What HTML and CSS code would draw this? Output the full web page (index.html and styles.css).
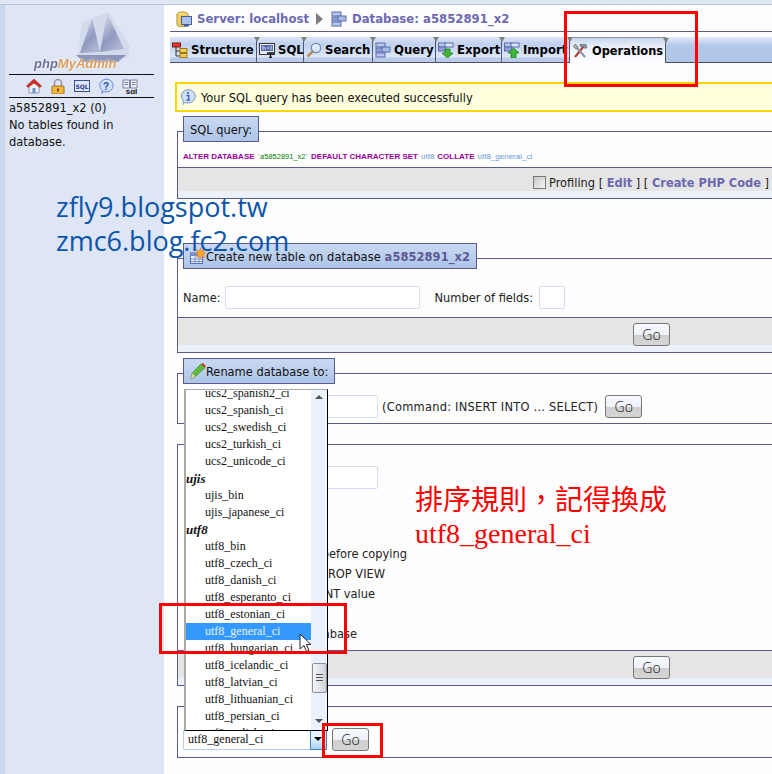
FILE: index.html
```html
<!DOCTYPE html>
<html lang="en">
<head>
    <meta charset="UTF-8">
    <meta name="viewport" content="width=device-width, initial-scale=1.0">
    <title>phpMyAdmin</title>
    <link rel="stylesheet" href="styles.css">
</head>
<body>
    <!-- shared icons -->
    <svg class="defs" width="0" height="0">
        <defs>
            <linearGradient id="sailGrad" x1="0" y1="0" x2="0.6" y2="1">
                <stop offset="0" stop-color="#e2e7f4"/>
                <stop offset="0.65" stop-color="#8f99bf"/>
                <stop offset="1" stop-color="#aeb6d2"/>
            </linearGradient>
        </defs>
        <symbol id="i-tables" viewBox="0 0 16 16">
            <rect x="1" y="1" width="9" height="4" fill="#b9c6ea" stroke="#5b6cae"/>
            <rect x="1" y="6" width="9" height="4" fill="#8fa3d8" stroke="#5b6cae"/>
            <rect x="1" y="11" width="9" height="4" fill="#b9c6ea" stroke="#5b6cae"/>
            <rect x="7" y="5" width="8" height="5" fill="#a9b9e4" stroke="#5b6cae"/>
        </symbol>
        <symbol id="i-structure" viewBox="0 0 16 16">
            <rect x="0.5" y="1" width="8" height="4" fill="#e33a2c" stroke="#7c1d14"/>
            <path d="M4 5v9h4M4 9h4" fill="none" stroke="#333"/>
            <rect x="8" y="6.5" width="7" height="4" fill="#f4cd4d" stroke="#9a7a1a"/>
            <rect x="8" y="11.5" width="7" height="4" fill="#f4cd4d" stroke="#9a7a1a"/>
        </symbol>
        <symbol id="i-sql" viewBox="0 0 16 16">
            <rect x="0.5" y="1.5" width="15" height="11" fill="#e8edf7" stroke="#333"/>
            <rect x="2" y="3" width="12" height="6" fill="#5a6cb0"/>
            <path d="M3 5h2M3 7h2M6 5v2h1M9 5v2M11 5h2M11 7h2" stroke="#fff" stroke-width="0.8"/>
            <path d="M8 11h7M11.500 11v4.500M10 15.500h3" stroke="#111" stroke-width="1.300"/>
        </symbol>
        <symbol id="i-search" viewBox="0 0 16 16">
            <path d="M1.500 14.500l5-5" stroke="#b98f55" stroke-width="2.500"/>
            <circle cx="10" cy="6" r="4.700" fill="#d8e8f8" stroke="#7488a8" stroke-width="1.300"/>
            <path d="M7.500 5a3 3 0 0 1 3-2" fill="none" stroke="#fff"/>
        </symbol>
        <symbol id="i-export" viewBox="0 0 16 16">
            <rect x="0.500" y="1" width="8" height="4" fill="#b9c6ea" stroke="#5b6cae"/>
            <rect x="7" y="1" width="8" height="4" fill="#dfe5f6" stroke="#5b6cae"/>
            <rect x="0.500" y="5" width="7" height="4" fill="#8fa3d8" stroke="#5b6cae"/>
            <path d="M7 7h5v4h3l-5.500 5L4 11h3z" fill="#3fb53a" stroke="#1e7a1e" stroke-width="0.800"/>
        </symbol>
        <symbol id="i-import" viewBox="0 0 16 16">
            <rect x="0.500" y="1" width="8" height="4" fill="#b9c6ea" stroke="#5b6cae"/>
            <rect x="7" y="1" width="8" height="4" fill="#dfe5f6" stroke="#5b6cae"/>
            <rect x="0.500" y="5" width="7" height="4" fill="#8fa3d8" stroke="#5b6cae"/>
            <path d="M9.500 6L15 11h-3v5H7v-5H4z" fill="#3fb53a" stroke="#1e7a1e" stroke-width="0.800"/>
        </symbol>
        <symbol id="i-ops" viewBox="0 0 16 16">
            <path d="M3 14L12 3" stroke="#b33a2a" stroke-width="2"/>
            <path d="M8 1.500h6l1 3-2 1-1.500-1.500-3-.5z" fill="#8d96a6" stroke="#4b5260" stroke-width="0.600"/>
            <path d="M13 14L5 5" stroke="#8a919e" stroke-width="2"/>
            <path d="M1.500 3l2-2 1 2 1.500.5L5 6 2.500 5z" fill="#aab1bd" stroke="#555" stroke-width="0.600"/>
        </symbol>
        <symbol id="i-home" viewBox="0 0 16 16">
            <path d="M3 8v7h10V8L8 4z" fill="#eef1f7" stroke="#8d95a8"/>
            <path d="M0.500 8L8 1l7.500 7-1.500 1.500L8 5 2 9.500z" fill="#d62d22" stroke="#8a1a14" stroke-width="0.500"/>
            <rect x="6.500" y="10" width="3" height="5" fill="#6f8fc8"/>
        </symbol>
        <symbol id="i-lock" viewBox="0 0 16 16">
            <path d="M4.500 8V5a3.500 3.500 0 0 1 7 0v3" fill="none" stroke="#9a9aa5" stroke-width="1.600"/>
            <rect x="2" y="8" width="12" height="8" rx="1" fill="#f2b73f" stroke="#a4701a"/>
            <rect x="7" y="10.500" width="2" height="3" fill="#7a5212"/>
        </symbol>
        <symbol id="i-info" viewBox="0 0 16 16">
            <path d="M8 .5a7.500 6.800 0 1 1-3.200 13L3 15.500l.4-3.500A7.500 6.800 0 0 1 8 .5z" fill="#cfdff6" stroke="#7f9ac9"/>
            <circle cx="8" cy="4" r="1.100" fill="#3e62a8"/>
            <path d="M6.500 6.500h2.300v4.500h1M6.500 11h2.500" fill="none" stroke="#3e62a8" stroke-width="1.300"/>
        </symbol>
        <symbol id="i-newtable" viewBox="0 0 16 16">
            <rect x="0.500" y="5" width="12" height="10.500" fill="#eef2fb" stroke="#5b6cae"/>
            <rect x="0.500" y="5" width="12" height="3" fill="#7b8fcb"/>
            <path d="M1 11h11M1 13.500h11M5 8v7.500M9 8v7.500" stroke="#7b8fcb"/>
            <path d="M10.500 0l1 3 3-1.500L13 4.500l3 1-3 1 1.500 3-3-1.500-1 3-1-3-3 1.500L8 6.500l-3-1 3-1L6.500 1.500l3 1.500z" fill="#f7a823" stroke="#d9631a" stroke-width="0.400"/>
        </symbol>
        <symbol id="i-pencil" viewBox="0 0 16 16">
            <path d="M1 15.500l1-5L11 1l4 3.500-9.500 9z" fill="#62bb3a" stroke="#2f7a1e" stroke-width="0.700"/>
            <path d="M11 1l4 3.500 1-1.500-3-3z" fill="#d93a2e"/>
            <path d="M1 15.500l1-5 3.500 3z" fill="#f0d7a8"/>
        </symbol>
    </svg>

    <div class="top-strip"></div>

    <div class="layout">
        <aside class="sidebar">
            <svg class="logo" viewBox="0 0 120 62" width="120" height="62">
                <g class="ship">
                    <path d="M62 12L88 2l22 34-2 12H58z" fill="#c3cbe2" opacity="0.45"/>
                    <path d="M72 8L60 43l20-1z" fill="url(#sailGrad)"/>
                    <path d="M87 3L80 42l24-3z" fill="url(#sailGrad)"/>
                    <path d="M56 45h50l-8 7H64z" fill="#8d96ba"/>
                </g>
                <text x="14" y="58" class="logo-php">php<tspan class="logo-my">MyAdmin</tspan></text>
            </svg>
            <div class="nav-icons">
                <svg class="icon"><use href="#i-home"/></svg>
                <svg class="icon"><use href="#i-lock"/></svg>
                <svg class="icon" viewBox="0 0 16 16">
                    <rect x="0.500" y="2.500" width="15" height="11" fill="#dfe6f6" stroke="#3a4d9a"/>
                    <text x="8" y="11" text-anchor="middle" class="icon-text">SQL</text>
                </svg>
                <svg class="icon" viewBox="0 0 16 16">
                    <path d="M8 1a7 6.500 0 1 1-3 12.300L4 15.500l.3-3A7 6.500 0 0 1 8 1z" fill="#cfe0f8" stroke="#6d8fd0"/>
                    <text x="8" y="11.500" text-anchor="middle" class="help-text">?</text>
                </svg>
                <svg class="icon" viewBox="0 0 16 16">
                    <path d="M1 2h6.500v8H1zM8.500 2H15v8H8.500z" fill="#eaeef7" stroke="#7a84a0"/>
                    <path d="M2.500 4.500h3.500M2.500 6.500h3.500M10 4.500h3.500M10 6.500h3.500" stroke="#7a84a0"/>
                    <text x="9.500" y="15.500" text-anchor="middle" class="docs-text">sql</text>
                </svg>
            </div>
            <div class="db-name">a5852891_x2 (0)</div>
            <div class="db-note">No tables found in database.</div>
        </aside>

        <main class="content">
            <div class="crumbs">
                <svg class="icon" viewBox="0 0 16 16">
                    <ellipse cx="6.500" cy="3.500" rx="5.500" ry="2.500" fill="#f7dd7c" stroke="#b08f2c"/>
                    <path d="M1 3.500v10c0 3 11 3 11 0v-10" fill="#f2cf5c" stroke="#b08f2c"/>
                    <rect x="5.500" y="5.500" width="10" height="8" fill="#a8c0ea" stroke="#44609c"/>
                    <rect x="8" y="14" width="5" height="1.500" fill="#44609c"/>
                </svg>
                <a class="crumb">Server: localhost</a>
                <span class="crumb-arrow"></span>
                <svg class="icon"><use href="#i-tables"/></svg>
                <a class="crumb">Database: a5852891_x2</a>
            </div>

            <div class="tabs">
                <div class="tab tab-structure"><svg class="icon"><use href="#i-structure"/></svg>Structure</div>
                <div class="tab tab-sql"><svg class="icon"><use href="#i-sql"/></svg>SQL</div>
                <div class="tab tab-search"><svg class="icon"><use href="#i-search"/></svg>Search</div>
                <div class="tab tab-query"><svg class="icon"><use href="#i-tables"/></svg>Query</div>
                <div class="tab tab-export"><svg class="icon"><use href="#i-export"/></svg>Export</div>
                <div class="tab tab-import"><svg class="icon"><use href="#i-import"/></svg>Import</div>
                <div class="tab tab-ops active"><svg class="icon"><use href="#i-ops"/></svg>Operations</div>
            </div>

            <div class="notice">
                <svg class="icon"><use href="#i-info"/></svg>
                Your SQL query has been executed successfully
            </div>

            <section class="panel panel-query">
                <div class="legend">SQL query:</div>
                <div class="sql-line">
                    <span class="kw">ALTER DATABASE</span>
                    <span class="str">`a5852891_x2`</span>
                    <span class="kw">DEFAULT CHARACTER SET</span>
                    <span class="val">utf8</span>
                    <span class="kw">COLLATE</span>
                    <span class="val">utf8_general_ci</span>
                </div>
                <div class="panel-foot foot-links">
                    <span class="fake-check"></span>
                    <span>Profiling [ <a class="link">Edit</a> ] [ <a class="link">Create PHP Code</a> ]</span>
                </div>
            </section>

            <section class="panel panel-create">
                <div class="legend">
                    <svg class="icon"><use href="#i-newtable"/></svg>
                    <span class="legend-wide">Create new table on database <b class="legend-db">a5852891_x2</b></span>
                </div>
                <div class="form-row">
                    <label>Name:</label>
                    <span class="field field-name"></span>
                    <label class="label-fields">Number of fields:</label>
                    <span class="field field-count"></span>
                </div>
                <div class="panel-foot foot-go"><button class="go">Go</button></div>
            </section>

            <section class="panel panel-rename">
                <div class="legend">
                    <svg class="icon"><use href="#i-pencil"/></svg>
                    <span>Rename database to:</span>
                </div>
                <div class="form-row rename-row">
                    <span class="field field-rename"></span>
                    <span class="rename-cmd">(Command: INSERT INTO ... SELECT)</span>
                    <button class="go">Go</button>
                </div>
            </section>

            <section class="panel panel-copy">
                <div class="form-row copy-input"><span class="field field-rename"></span></div>
                <ul class="copy-options">
                    <li class="opt-create">CREATE DATABASE before copying</li>
                    <li class="opt-drop">Add DROP TABLE / DROP VIEW</li>
                    <li class="opt-auto">Add AUTO_INCREMENT value</li>
                    <li class="opt-blank">Add constraints</li>
                    <li class="opt-switch">Switch to copied database</li>
                </ul>
                <div class="panel-foot foot-go"><button class="go">Go</button></div>
            </section>

            <section class="panel panel-collation">
                <div class="collation-row">
                    <div class="select-box">
                        <span>utf8_general_ci</span>
                        <span class="select-btn"></span>
                    </div>
                    <button class="go">Go</button>
                </div>
            </section>
        </main>
    </div>

    <!-- open dropdown -->
    <div class="dropdown">
        <ul class="options">
            <li>ucs2_spanish2_ci</li>
            <li>ucs2_spanish_ci</li>
            <li>ucs2_swedish_ci</li>
            <li>ucs2_turkish_ci</li>
            <li>ucs2_unicode_ci</li>
            <li class="group">ujis</li>
            <li>ujis_bin</li>
            <li>ujis_japanese_ci</li>
            <li class="group">utf8</li>
            <li>utf8_bin</li>
            <li>utf8_czech_ci</li>
            <li>utf8_danish_ci</li>
            <li>utf8_esperanto_ci</li>
            <li>utf8_estonian_ci</li>
            <li class="selected">utf8_general_ci</li>
            <li>utf8_hungarian_ci</li>
            <li>utf8_icelandic_ci</li>
            <li>utf8_latvian_ci</li>
            <li>utf8_lithuanian_ci</li>
            <li>utf8_persian_ci</li>
            <li>utf8_polish_ci</li>
        </ul>
        <div class="scrollbar">
            <span class="arrow-up"></span>
            <span class="thumb"></span>
            <span class="arrow-down"></span>
        </div>
    </div>

    <svg class="cursor" viewBox="0 0 13 20" width="13" height="20">
        <path d="M1 1v15l4-3.500 2.500 6 2.500-1-2.500-6H12z" fill="#fff" stroke="#223" stroke-width="1"/>
    </svg>

    <!-- annotations pasted over the screenshot -->
    <div class="watermark wm-1">zfly9.blogspot.tw</div>
    <div class="watermark wm-2">zmc6.blog.fc2.com</div>
    <div class="note-red">
        <div class="note-zh">排序規則，記得換成</div>
        <div class="note-en">utf8_general_ci</div>
    </div>
    <div class="redbox box-ops"></div>
    <div class="redbox box-general"></div>
    <div class="redbox box-go"></div>
</body>
</html>
```

FILE: styles.css
```css
* {
    box-sizing: border-box;
}

html, body {
    height: 774px;
    overflow: hidden;
}

body {
    margin: 0;
    position: relative;
    font-family: "DejaVu Sans", sans-serif;
    font-stretch: condensed;
    font-size: 12.7px;
    color: #222;
    background: #fdfdfe;
}

.defs {
    position: absolute;
}

.icon {
    width: 16px;
    height: 16px;
    flex: none;
    display: block;
}

.icon-text {
    font: bold 6px "DejaVu Sans", sans-serif;
    fill: #2a3f95;
}

.help-text {
    font: bold 10px "Liberation Sans", sans-serif;
    fill: #2a4fa8;
}

.docs-text {
    font: bold 8px "Liberation Sans", sans-serif;
    fill: #111;
}

.top-strip {
    height: 5px;
    background: #dfe7f5;
    border-bottom: 1px solid #b5c5d3;
}

.layout {
    display: flex;
    height: 769px;
}

/* Left frame */
.sidebar {
    width: 164px;
    flex: none;
    padding: 0 10px 0 4px;
    background: #dee6f5;
    border-left: 5px solid #cbd9f0;
}

.logo {
    display: block;
    margin: 5px 0 2px 11px;
}

.ship {
    filter: blur(0.6px);
}

.logo-php {
    font: italic bold 13px "Liberation Sans", sans-serif;
    font-stretch: normal;
    fill: #6f6f97;
    filter: drop-shadow(0 0 1px #fff);
}

.logo-my {
    fill: #dd9f58;
}

.nav-icons {
    display: flex;
    justify-content: center;
    gap: 8px;
    height: 24px;
    padding-top: 3px;
    border-top: 1px solid #111;
    border-bottom: 1px solid #111;
}

.db-name {
    margin-top: 1px;
    line-height: 17px;
    color: #111;
}

.db-note {
    line-height: 17px;
    color: #111;
}

/* Right frame */
.content {
    flex: 1;
    min-width: 0;
    padding-left: 6px;
    overflow: hidden;
}

.crumbs {
    display: flex;
    align-items: center;
    height: 27px;
    padding: 1px 0 0 6px;
    border-bottom: 1px solid #5a5a80;
    gap: 5px;
    font-size: 13px;
    font-weight: bold;
}

.crumb {
    color: #6c6ab0;
}

.crumb-arrow {
    width: 0;
    height: 0;
    margin: 0 3px 0 2px;
    border-left: 7px solid #7d7d7d;
    border-top: 6px solid transparent;
    border-bottom: 6px solid transparent;
}

.tabs {
    display: flex;
    height: 26px;
    margin-top: 5px;
    background: linear-gradient(#e3eaf7, #b3c8ea 35%, #b0c6e8);
    border-bottom: 1px solid #4d4d6c;
}

.tab {
    position: relative;
    display: flex;
    align-items: center;
    gap: 3px;
    height: 25px;
    padding-left: 2px;
    font-size: 13px;
    font-weight: bold;
    color: #000;
    border-right: 1px solid #55556f;
    background: linear-gradient(#dbe4f5, #bfd1ee 30%, #dde7f6 80%, #b9cbe8 84%);
}

.tab::before {
    content: "";
    position: absolute;
    top: 0;
    right: -4px;
    z-index: 1;
    border-top: 5px solid #808080;
    border-left: 3px solid transparent;
    border-right: 3px solid transparent;
}

.tab-structure { width: 87px; }
.tab-sql { width: 47px; }
.tab-search { width: 69px; }
.tab-query { width: 63px; }
.tab-export { width: 66px; }
.tab-import { width: 68px; }
.tab-ops { width: 96px; }

.tab.active {
    height: 26px;
    gap: 4px;
    font-size: 12.7px;
    background: linear-gradient(#c8d6ee, #eef3fb 40%, #fdfdfe);
    border-top: 1px solid #909090;
    border-right: 1px solid #555;
}

.notice {
    display: flex;
    align-items: center;
    gap: 5px;
    height: 30px;
    margin: 19px 0 0 5px;
    padding-left: 3px;
    color: #111;
    background: #ffffdd;
    border-top: 2px solid #ffd700;
    border-bottom: 2px solid #ffd700;
    border-left: 2px solid #ffd700;
}

.panel {
    width: 620px;
    margin-left: 7px;
    border: 1px solid #5a5a8e;
    border-right: 0;
    padding: 0;
}

.panel-query { margin-top: 19px; }
.panel-create { margin-top: 59px; }
.panel-rename { margin-top: 20px; }
.panel-copy { margin-top: 20px; height: 242px; display: flex; flex-direction: column; }
.panel-collation { margin-top: 20px; height: 52px; }

.legend {
    display: flex;
    align-items: center;
    width: fit-content;
    height: 26px;
    margin: -16px 0 0 5px;
    padding: 0 6px;
    color: #111;
    background: linear-gradient(#c9d9f1, #adc4e8);
    border: 1px solid #5a5a8e;
}

.legend-wide {
    letter-spacing: 0.1px;
}

.legend-db {
    color: #5c5a94;
}

.sql-line {
    display: flex;
    gap: 3px;
    height: 25px;
    align-items: center;
    padding: 3px 0 0 5px;
    font: bold 8px "Liberation Sans", sans-serif;
}

.kw { color: #990099; }
.str { color: #008000; font-weight: normal; font-size: 7.5px; }
.val { color: #6a9bd8; font-weight: normal; }

.panel-foot {
    background: #e5e5e5;
    border-top: 1px solid #5a5a8e;
    border-bottom: 7px solid #eaf1fb;
}

.foot-links {
    display: flex;
    align-items: center;
    gap: 3px;
    height: 31px;
    padding: 6px 0 0 355px;
    color: #222;
}

.fake-check {
    width: 13px;
    height: 13px;
    background: linear-gradient(135deg, #c8c8c8, #f4f4f4);
    border: 1px solid #777;
}

.link {
    font-weight: bold;
    color: #6a68ae;
}

.foot-go {
    height: 35px;
    padding: 5px 0 0 455px;
}

.panel-copy .panel-foot {
    margin-top: auto;
}

.go {
    width: 37px;
    height: 23px;
    padding: 0;
    font-family: "Open Sans", sans-serif;
    font-stretch: normal;
    font-size: 14px;
    font-weight: 300;
    color: #111;
    border: 1px solid #777;
    border-radius: 3px;
    background: linear-gradient(#f6f9fd 0, #eef2f8 50%, #cfcfcf 52%, #d6d6d6);
}

.form-row {
    display: flex;
    align-items: center;
    padding: 17px 0 8px 5px;
}

.field {
    display: block;
    height: 23px;
    background: #fff;
    border: 1px solid #d5dfef;
    border-radius: 2px;
}

.field-name {
    width: 195px;
    margin-left: 4px;
}

.label-fields {
    margin-left: 15px;
}

.field-count {
    width: 26px;
    margin-left: 6px;
}

.field-rename {
    width: 179px;
}

.rename-row {
    gap: 4px;
    padding: 11px 0 5px 21px;
}

.rename-cmd {
    letter-spacing: 0.25px;
}

.rename-row .go {
    margin-left: 3px;
}

.copy-input {
    padding: 21px 0 0 21px;
}

.copy-options {
    list-style: none;
    margin: 55px 0 0;
    padding: 0;
    width: 300px;
}

.copy-options li {
    height: 20px;
    line-height: 20px;
    text-align: right;
}

.opt-create { width: 229px; }
.opt-drop { width: 207px; }
.opt-auto { width: 197px; }
.opt-blank { width: 100px; visibility: hidden; }
.opt-switch { width: 179px; }

.collation-row {
    display: flex;
    align-items: center;
    gap: 5px;
    padding: 21px 0 0 5px;
}

.select-box {
    display: flex;
    align-items: center;
    justify-content: space-between;
    width: 144px;
    height: 21px;
    padding-left: 4px;
    font: 12px "Liberation Serif", serif;
    color: #111;
    background: #fff;
    border: 1px solid #b4d0ea;
    border-radius: 2px;
}

.select-btn {
    position: relative;
    width: 17px;
    height: 21px;
    margin-right: -1px;
    background: linear-gradient(#e8f2fc 40%, #a9d2f2);
    border: 1px solid #3d86c6;
}

.select-btn::after {
    content: "";
    position: absolute;
    top: 7px;
    left: 3px;
    border-top: 4px solid #000;
    border-left: 4px solid transparent;
    border-right: 4px solid transparent;
}

/* Dropdown list, open over the form */
.dropdown {
    position: absolute;
    left: 184px;
    top: 389px;
    width: 144px;
    height: 342px;
    display: flex;
    overflow: hidden;
    background: #fff;
    border-top: 1px solid #aaa;
    border-left: 2px solid #aaa;
    border-right: 1px solid #000;
    border-bottom: 1px solid #000;
}

.options {
    flex: 1;
    list-style: none;
    margin: -5px 0 0;
    padding: 0;
    font: 12px "Liberation Serif", serif;
    color: #111;
}

.options li {
    height: 17px;
    line-height: 17px;
    padding-left: 19px;
    white-space: nowrap;
}

.options .group {
    padding-left: 0;
    font-weight: bold;
    font-style: italic;
    font-size: 13px;
}

.options .selected {
    color: #e8f2ff;
    background: #3399ff;
}

.scrollbar {
    position: relative;
    display: flex;
    flex-direction: column;
    align-items: center;
    width: 16px;
    background: #eaf2fd;
}

.arrow-up {
    margin-top: 5px;
    border-bottom: 4px solid #555;
    border-left: 4px solid transparent;
    border-right: 4px solid transparent;
}

.thumb {
    margin-top: 264px;
    width: 15px;
    height: 30px;
    border: 1px solid #8a8f98;
    border-radius: 2px;
    background: repeating-linear-gradient(#555 0 1px, #e4e4e4 1px 3px) center / 7px 8px no-repeat,
        linear-gradient(90deg, #f4f6fa, #cfd3da);
}

.arrow-down {
    margin-top: 26px;
    border-top: 4px solid #555;
    border-left: 4px solid transparent;
    border-right: 4px solid transparent;
}

.cursor {
    position: absolute;
    left: 299px;
    top: 633px;
}

/* Annotations */
.watermark {
    position: absolute;
    left: 56px;
    font-family: "Open Sans", sans-serif;
    font-stretch: normal;
    font-size: 27px;
    line-height: 30px;
    color: #0b55ab;
    white-space: nowrap;
}

.wm-1 { top: 192px; }
.wm-2 { top: 226px; }

.note-red {
    position: absolute;
    left: 415px;
    top: 481px;
    color: #f00;
    font-stretch: normal;
    white-space: nowrap;
}

.note-zh {
    font-family: "Noto Sans CJK TC", sans-serif;
    font-size: 28px;
    line-height: 35px;
}

.note-en {
    font-family: "Liberation Serif", serif;
    font-size: 28px;
    line-height: 35px;
}

.redbox {
    position: absolute;
    border: 3px solid #f00;
}

.box-ops { left: 564px; top: 11px; width: 134px; height: 76px; }
.box-general { left: 159px; top: 603px; width: 188px; height: 51px; }
.box-go { left: 322px; top: 723px; width: 61px; height: 35px; }
```
